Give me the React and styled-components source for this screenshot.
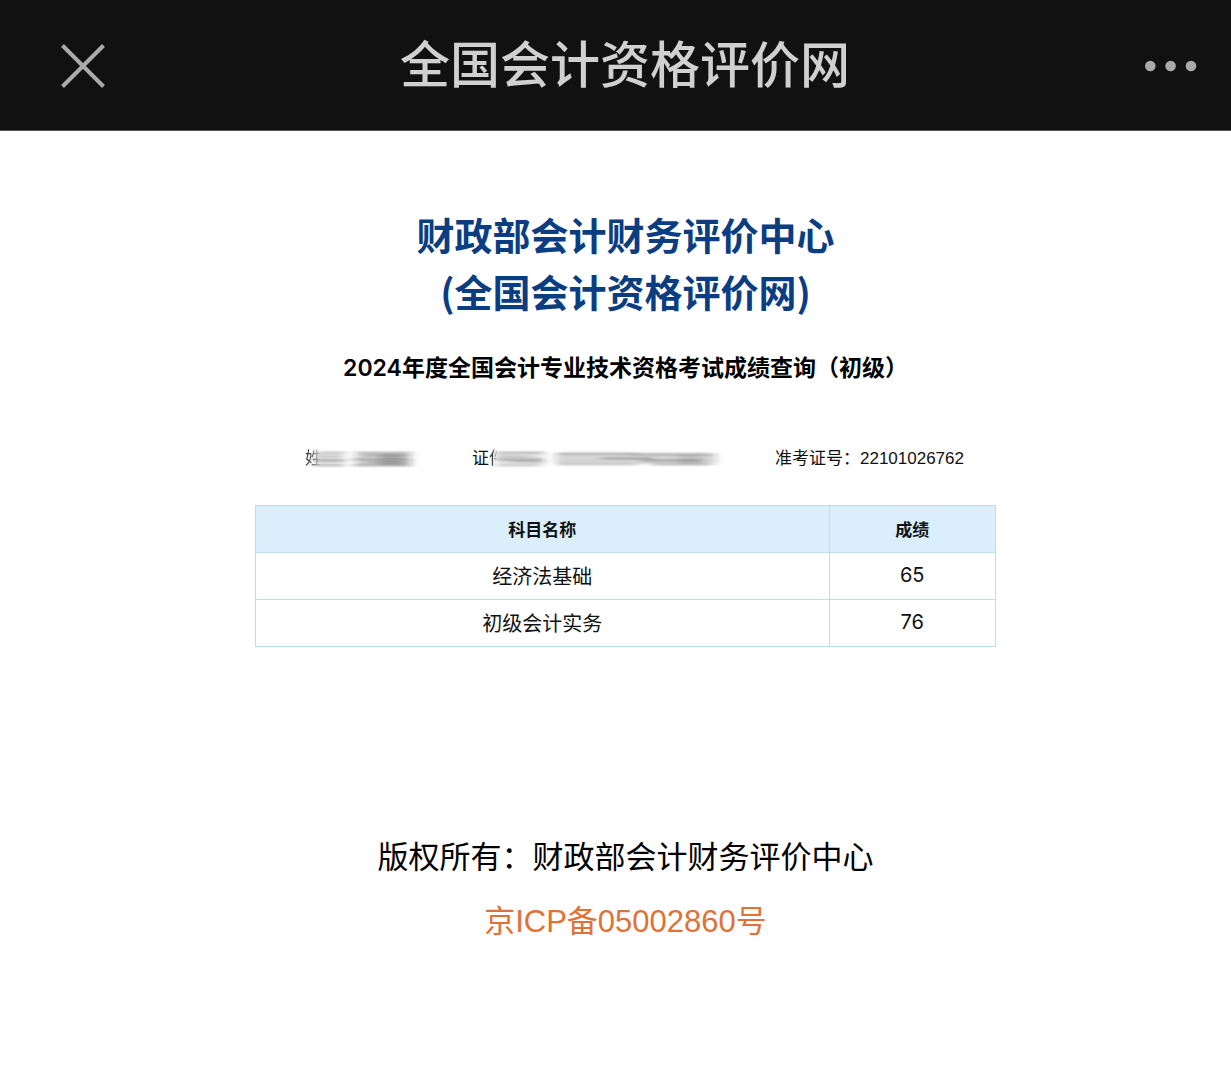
import styled, { createGlobalStyle } from "styled-components";

const scores = [
  { id: "1", subject: "经济法基础", score: 65 },
  { id: "2", subject: "初级会计实务", score: 76 },
];

// [x, y, width, height, opacity]
const nameStrokes = [
  [2, 1, 30, 14, 0.1],
  [42, 1, 56, 14, 0.2],
  [4, 1, 28, 1, 0.4],
  [2, 5, 26, 1, 0.3],
  [0, 9, 32, 1, 0.6],
  [0, 14, 30, 1, 0.5],
  [44, 1, 54, 1, 0.4],
  [50, 4, 46, 1, 0.4],
  [40, 8, 58, 1, 0.5],
  [52, 11, 46, 1, 0.4],
  [40, 14, 58, 1, 0.5],
  [66, 3, 24, 11, 0.18],
];

const idStrokes = [
  [4, 1, 48, 13, 0.14],
  [64, 2, 160, 11, 0.2],
  [4, 1, 48, 1, 0.5],
  [4, 5, 34, 1, 0.3],
  [4, 8, 46, 1, 0.6],
  [20, 10, 32, 1, 0.4],
  [4, 14, 44, 1, 0.4],
  [66, 2, 78, 1, 0.5],
  [140, 3, 80, 1, 0.4],
  [110, 7, 50, 1, 0.5],
  [150, 9, 60, 1, 0.5],
  [66, 13, 78, 1, 0.4],
  [160, 13, 58, 1, 0.5],
  [186, 4, 24, 9, 0.1],
];

const Smudge = ({ id, width, left, strokes }) => (
  <SmudgeSvg width={width} height="18" $left={left} aria-hidden="true">
    <filter
      id={id}
      filterUnits="userSpaceOnUse"
      x="-20"
      y="-10"
      width={width + 40}
      height="38"
    >
      <feGaussianBlur stdDeviation="4 0.8" />
    </filter>
    <g filter={`url(#${id})`}>
      {strokes.map(([x, y, w, h, opacity], index) => (
        <rect
          key={index}
          x={x}
          y={y}
          width={w}
          height={h}
          fill="#222"
          opacity={opacity}
        />
      ))}
    </g>
  </SmudgeSvg>
);

const App = () => {
  return (
    <>
      <GlobalStyle />
      <TopBar lang="zh-CN">
        <IconButton aria-label="关闭">
          <svg width="44" height="44" viewBox="0 0 44 44">
            <path
              d="M1.5 1.5L42.5 42.5M42.5 1.5L1.5 42.5"
              stroke="#aaa"
              strokeWidth="4"
              fill="none"
            />
          </svg>
        </IconButton>
        <BarTitle>全国会计资格评价网</BarTitle>
        <IconButton aria-label="更多">
          <svg width="52" height="12" viewBox="0 0 52 12" fill="#aaa">
            <circle cx="5.3" cy="6" r="5.3" />
            <circle cx="25.6" cy="6" r="5.3" />
            <circle cx="46" cy="6" r="5.3" />
          </svg>
        </IconButton>
      </TopBar>
      <Main lang="zh-CN">
        <Title>
          财政部会计财务评价中心
          <br />
          (全国会计资格评价网)
        </Title>
        <SubTitle>2024年度全国会计专业技术资格考试成绩查询（初级）</SubTitle>
        <InfoRow>
          <InfoItem $width={112}>
            <FadedText $end={100}>姓</FadedText>
            <Smudge id="name" width={102} left={8} strokes={nameStrokes} />
          </InfoItem>
          <InfoItem $width={248}>
            证<FadedText $end={50}>件</FadedText>
            <Smudge id="idNumber" width={230} left={20} strokes={idStrokes} />
          </InfoItem>
          <InfoItem>准考证号：22101026762</InfoItem>
        </InfoRow>
        <ScoreTable>
          <thead>
            <tr>
              <Th scope="col">科目名称</Th>
              <Th scope="col" $width="22.5%">
                成绩
              </Th>
            </tr>
          </thead>
          <tbody>
            {scores.map(({ id, subject, score }) => (
              <tr key={id}>
                <Td>{subject}</Td>
                <Td>{score}</Td>
              </tr>
            ))}
          </tbody>
        </ScoreTable>
        <Footer>
          <p>版权所有：财政部会计财务评价中心</p>
          <IcpLink href="#">京ICP备05002860号</IcpLink>
        </Footer>
      </Main>
    </>
  );
};

export default App;

const GlobalStyle = createGlobalStyle`
  * {
    box-sizing: border-box;
    margin: 0;
    padding: 0;
  }

  body {
    background-color: #fff;
    color: #111;
    font-family: "Liberation Sans", "Noto Sans CJK SC", sans-serif;
  }
`;

const TopBar = styled.header`
  display: flex;
  align-items: center;
  justify-content: space-between;
  height: 131px;
  padding: 2px 34px 0 61px;
  background-color: #111;
  border-bottom: 1px solid #555;
`;

const IconButton = styled.button`
  display: flex;
  background: none;
  border: none;
  cursor: pointer;
`;

const BarTitle = styled.h1`
  font-size: 50px;
  font-weight: 500;
  line-height: 72px;
  color: #d0d0d0;
`;

const Main = styled.main`
  padding: 74px 235px 0 255px;
`;

const Title = styled.h2`
  font-family: "Noto Sans CJK SC", sans-serif;
  font-size: 38px;
  font-weight: 700;
  line-height: 57px;
  color: #0b3d82;
  text-align: center;
  white-space: nowrap;
`;

const SubTitle = styled.h3`
  margin-top: 32px;
  font-family: Inter, "Noto Sans CJK SC", sans-serif;
  font-size: 23px;
  font-weight: 600;
  line-height: 34px;
  color: #000;
  text-align: center;
  white-space: nowrap;
`;

const InfoRow = styled.div`
  display: flex;
  justify-content: space-between;
  margin: 61px 0 33px;
  padding: 0 32px 0 50px;
  font-size: 17px;
  line-height: 26px;
  white-space: nowrap;
`;

const InfoItem = styled.div`
  position: relative;
  width: ${(props) => (props.$width ? `${props.$width}px` : "auto")};
`;

const FadedText = styled.span`
  color: #444;
  mask-image: linear-gradient(
    to right,
    #000 20%,
    transparent ${(props) => props.$end}%
  );
`;

const SmudgeSvg = styled.svg`
  position: absolute;
  top: 5px;
  left: ${(props) => props.$left}px;
  overflow: visible;
`;

const ScoreTable = styled.table`
  width: 100%;
  table-layout: fixed;
  border-collapse: collapse;
  text-align: center;
`;

const Th = styled.th`
  width: ${(props) => props.$width || "auto"};
  height: 47px;
  padding-bottom: 2px;
  border: 1px solid #b9deeb;
  background-color: #daeffb;
  font-size: 17px;
  font-weight: 700;
`;

const Td = styled.td`
  height: 47px;
  padding-bottom: 2px;
  border: 1px solid #b9deeb;
  font-family: Inter, "Noto Sans CJK SC", sans-serif;
  font-size: 20px;
`;

const Footer = styled.footer`
  margin-top: 179px;
  font-size: 31px;
  line-height: 64px;
  color: #000;
  text-align: center;
  white-space: nowrap;
`;

const IcpLink = styled.a`
  color: #e07237;
  text-decoration: none;
`;
